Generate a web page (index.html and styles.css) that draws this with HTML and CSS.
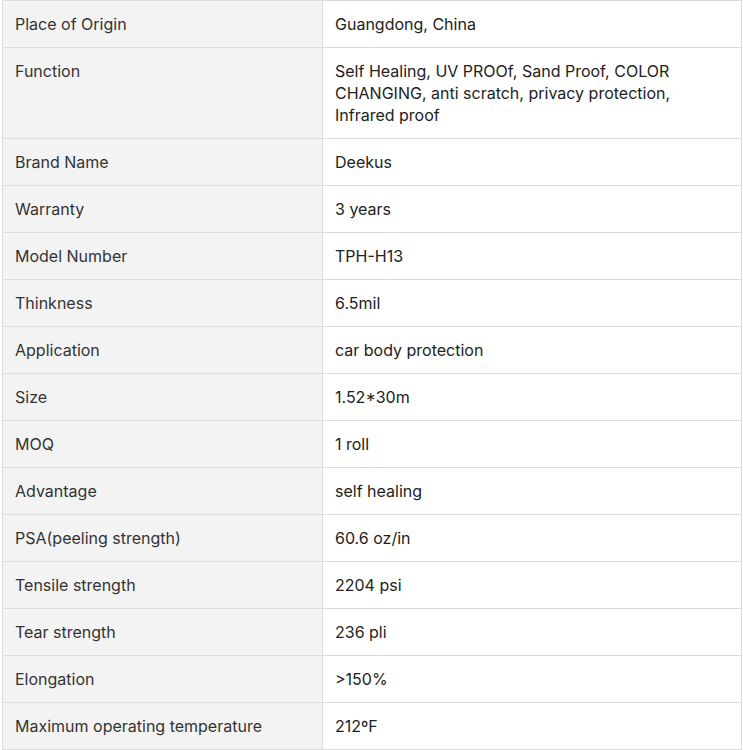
FILE: index.html
```html
<!DOCTYPE html>
<html>
<head>
<meta charset="utf-8">
<link rel="stylesheet" href="styles.css">
</head>
<body>
<table class="spec">
<tbody>
<tr><th>Place of Origin</th><td>Guangdong, China</td></tr>
<tr><th>Function</th><td>Self Healing, UV PROOf, Sand Proof, COLOR CHANGING, anti scratch, privacy protection, Infrared proof</td></tr>
<tr><th>Brand Name</th><td>Deekus</td></tr>
<tr><th>Warranty</th><td>3 years</td></tr>
<tr><th>Model Number</th><td>TPH-H13</td></tr>
<tr><th>Thinkness</th><td>6.5mil</td></tr>
<tr><th>Application</th><td>car body protection</td></tr>
<tr><th>Size</th><td>1.52*30m</td></tr>
<tr><th>MOQ</th><td>1 roll</td></tr>
<tr><th>Advantage</th><td>self healing</td></tr>
<tr><th>PSA(peeling strength)</th><td>60.6 oz/in</td></tr>
<tr><th>Tensile strength</th><td>2204 psi</td></tr>
<tr><th>Tear strength</th><td>236 pli</td></tr>
<tr><th>Elongation</th><td>&gt;150%</td></tr>
<tr><th>Maximum operating temperature</th><td>212ºF</td></tr>
</tbody>
</table>
</body>
</html>
```
FILE: styles.css
```css
html, body {
  margin: 0;
  padding: 0;
  background: #fff;
}
body {
  padding: 0 1px 0 2px;
  font-family: Inter, "Liberation Sans", sans-serif;
  font-size: 16px;
  line-height: 22px;
}
.spec {
  width: 740px;
  border-collapse: collapse;
  table-layout: fixed;
}
.spec th, .spec td {
  border: 1px solid #dcdcdc;
  padding: 12px 12px;
  text-align: left;
  vertical-align: top;
  font-weight: 400;
}
.spec th {
  width: 295px;
  background: #f3f3f3;
  color: #333;
}
.spec td {
  background: #fff;
  color: #222;
}
```
